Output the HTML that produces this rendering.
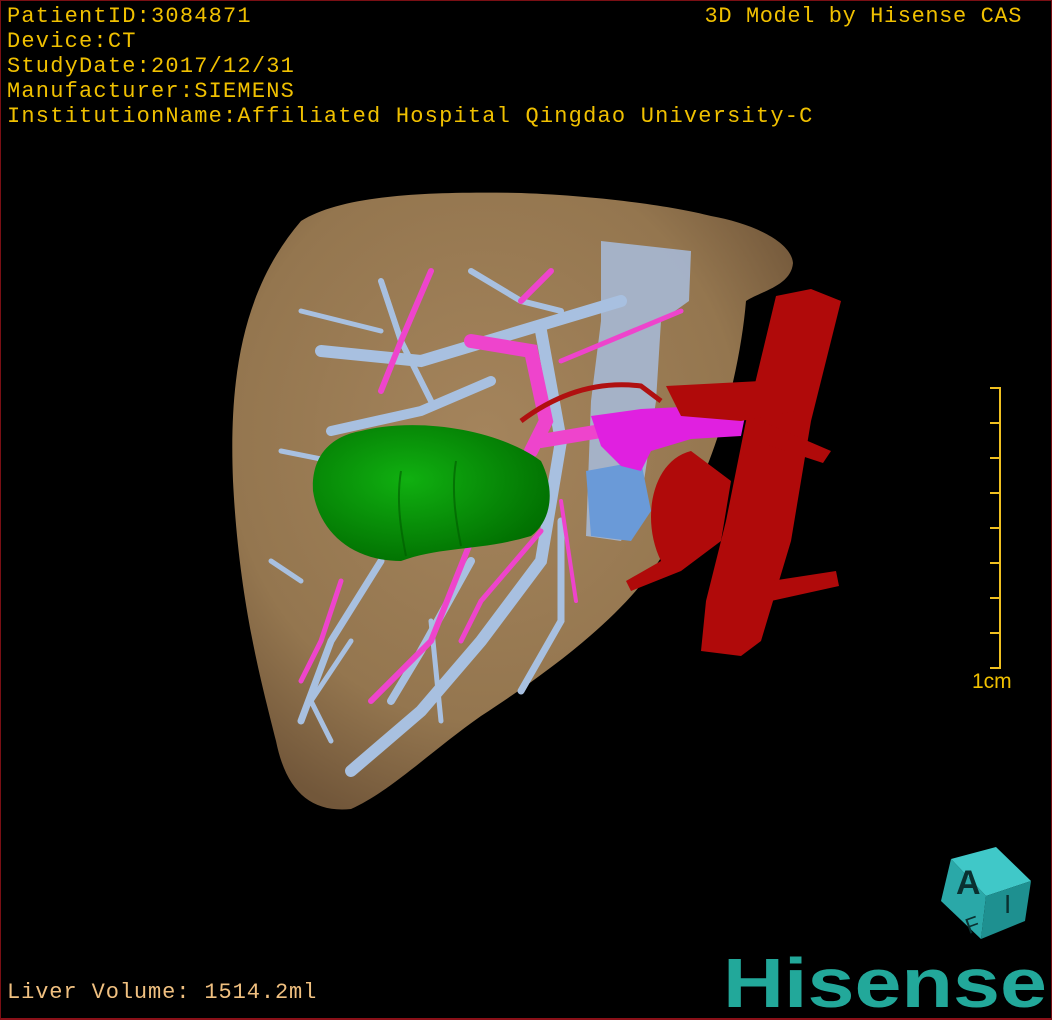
<!DOCTYPE html>
<html><head><meta charset="utf-8"><style>
html,body{margin:0;padding:0;background:#000}
#w{position:relative;width:1052px;height:1020px;background:#000;overflow:hidden;box-sizing:border-box;border:1px solid #7a0f14;border-bottom:2px solid #8a1018}
.t{position:absolute;font-family:"Liberation Mono","DejaVu Sans Mono",monospace;color:#f0c000;font-size:22px;line-height:25px;white-space:pre;letter-spacing:1.2px}
</style></head><body><div id="w">
<div class="t" style="left:6px;top:3px">PatientID:3084871
Device:CT
StudyDate:2017/12/31
Manufacturer:SIEMENS
InstitutionName:Affiliated Hospital Qingdao University-C</div>
<div class="t" style="right:29px;top:3px;letter-spacing:0.6px">3D Model by Hisense CAS</div>
<div class="t" style="left:6px;top:979px;color:#f0c080;letter-spacing:0.9px">Liver Volume: 1514.2ml</div>
<div class="t" style="left:971px;top:668px;font-family:'Liberation Sans',sans-serif;font-size:21px;letter-spacing:0">1cm</div>
<svg width="1052" height="1020" style="position:absolute;left:0;top:0">
<defs>
<radialGradient id="lv" cx="45%" cy="40%" r="65%"><stop offset="0" stop-color="#a4845c"/><stop offset="0.7" stop-color="#94764f"/><stop offset="1" stop-color="#72573a"/></radialGradient>
<radialGradient id="gr" cx="40%" cy="40%" r="70%"><stop offset="0" stop-color="#10b010"/><stop offset="1" stop-color="#006a00"/></radialGradient>
</defs>
<path d="M300,220 C340,195 420,190 520,192 C600,195 670,205 710,215 C750,222 790,240 792,262 C790,285 760,290 745,300 C740,360 720,450 680,520 C650,590 580,650 480,715 C430,750 390,790 350,808 C310,812 285,790 275,740 C260,680 238,600 232,480 C228,380 240,290 300,220 Z" fill="url(#lv)"/>
<path d="M600,240 L690,250 L688,300 L660,320 L655,400 L640,500 L620,540 L585,535 L590,400 L600,320 Z" fill="#a6b8d4" opacity="0.9"/>
<path d="M585,470 L640,460 L650,510 L630,540 L590,535 Z" fill="#6a9ad8"/>
<g fill="none" stroke="#a8c0e0" stroke-linecap="round">
<path d="M320,350 L420,360 L520,330 L620,300" stroke-width="12"/>
<path d="M330,430 L420,410 L490,380" stroke-width="10"/>
<path d="M380,280 L400,340 L430,400" stroke-width="6"/>
<path d="M300,310 L380,330" stroke-width="5"/>
<path d="M470,270 L520,300 L560,310" stroke-width="6"/>
<path d="M540,330 L560,440 L540,560 L480,640 L420,710 L350,770" stroke-width="12"/>
<path d="M470,560 L420,650 L390,700" stroke-width="8"/>
<path d="M560,520 L560,620 L520,690" stroke-width="7"/>
<path d="M380,560 L330,640 L300,720" stroke-width="7"/>
<path d="M300,580 L270,560" stroke-width="5"/>
<path d="M430,620 L440,720" stroke-width="5"/>
<path d="M350,640 L310,700 L330,740" stroke-width="5"/>
<path d="M280,450 L330,460" stroke-width="5"/>
</g>
<g fill="none" stroke="#ee44cc" stroke-linecap="round">
<path d="M430,270 L400,340 L380,390" stroke-width="6"/>
<path d="M470,340 L530,350 L545,420 L530,450" stroke-width="14"/>
<path d="M520,300 L550,270" stroke-width="6"/>
<path d="M540,440 L600,430 L660,420" stroke-width="14"/>
<path d="M560,360 L680,310" stroke-width="5"/>
<path d="M470,540 L430,640 L370,700" stroke-width="6"/>
<path d="M540,530 L480,600 L460,640" stroke-width="5"/>
<path d="M340,580 L320,640 L300,680" stroke-width="5"/>
<path d="M560,500 L575,600" stroke-width="4"/>
</g>
<path d="M590,415 L640,408 L700,405 L745,410 L740,435 L690,438 L650,450 L640,470 L620,465 L600,445 Z" fill="#e020e0"/>
<path d="M520,420 C560,390 600,380 640,385 L660,400" fill="none" stroke="#b01010" stroke-width="5"/>
<g fill="#b00a0a">
<path d="M775,295 L810,288 L840,300 L810,420 L790,540 L760,640 L740,655 L700,650 L705,600 L725,520 L745,420 Z"/>
<path d="M665,385 L760,380 L800,390 L795,410 L740,420 L680,415 Z"/>
<path d="M760,420 L830,450 L822,462 L755,440 Z"/>
<path d="M770,580 L835,570 L838,585 L770,600 Z"/>
<path d="M690,450 C650,460 640,520 660,560 L625,580 L630,590 L680,570 L720,540 L730,480 Z"/>
</g>
<path d="M360,430 C420,415 500,430 540,460 C555,490 550,520 530,535 C480,550 440,545 400,560 C350,560 318,530 312,490 C310,455 330,435 360,430 Z" fill="url(#gr)"/>
<path d="M400,470 C395,500 400,530 405,555 M455,460 C450,490 455,520 460,545" stroke="#005a00" stroke-width="2" fill="none" opacity="0.6"/>
<g stroke="#f0c020" stroke-width="2"><line x1="999" y1="386" x2="999" y2="668"/>
<line x1="989" y1="387" x2="999" y2="387"/><line x1="989" y1="422" x2="999" y2="422"/><line x1="989" y1="457" x2="999" y2="457"/><line x1="989" y1="492" x2="999" y2="492"/><line x1="989" y1="527" x2="999" y2="527"/><line x1="989" y1="562" x2="999" y2="562"/><line x1="989" y1="597" x2="999" y2="597"/><line x1="989" y1="632" x2="999" y2="632"/><line x1="989" y1="667" x2="999" y2="667"/></g>
<polygon points="950,858 995,846 1030,880 985,895" fill="#40c8c8"/>
<polygon points="940,900 950,858 985,895 980,938" fill="#2aa8a8"/>
<polygon points="985,895 1030,880 1024,920 980,938" fill="#1e9090"/>
<text x="955" y="893" font-family="Liberation Sans,sans-serif" font-size="34" fill="#0a3030" font-weight="bold">A</text>
<text x="965" y="932" font-family="Liberation Sans,sans-serif" font-size="22" fill="#0a3030" transform="rotate(-20 970 925)">F</text>
<text x="1003" y="912" font-family="Liberation Sans,sans-serif" font-size="26" fill="#0a3030">I</text>
<text x="722" y="1006" font-family="Liberation Sans,sans-serif" font-size="70" font-weight="bold" fill="#22a89a" textLength="324" lengthAdjust="spacingAndGlyphs">Hisense</text>
</svg>
</div></body></html>
